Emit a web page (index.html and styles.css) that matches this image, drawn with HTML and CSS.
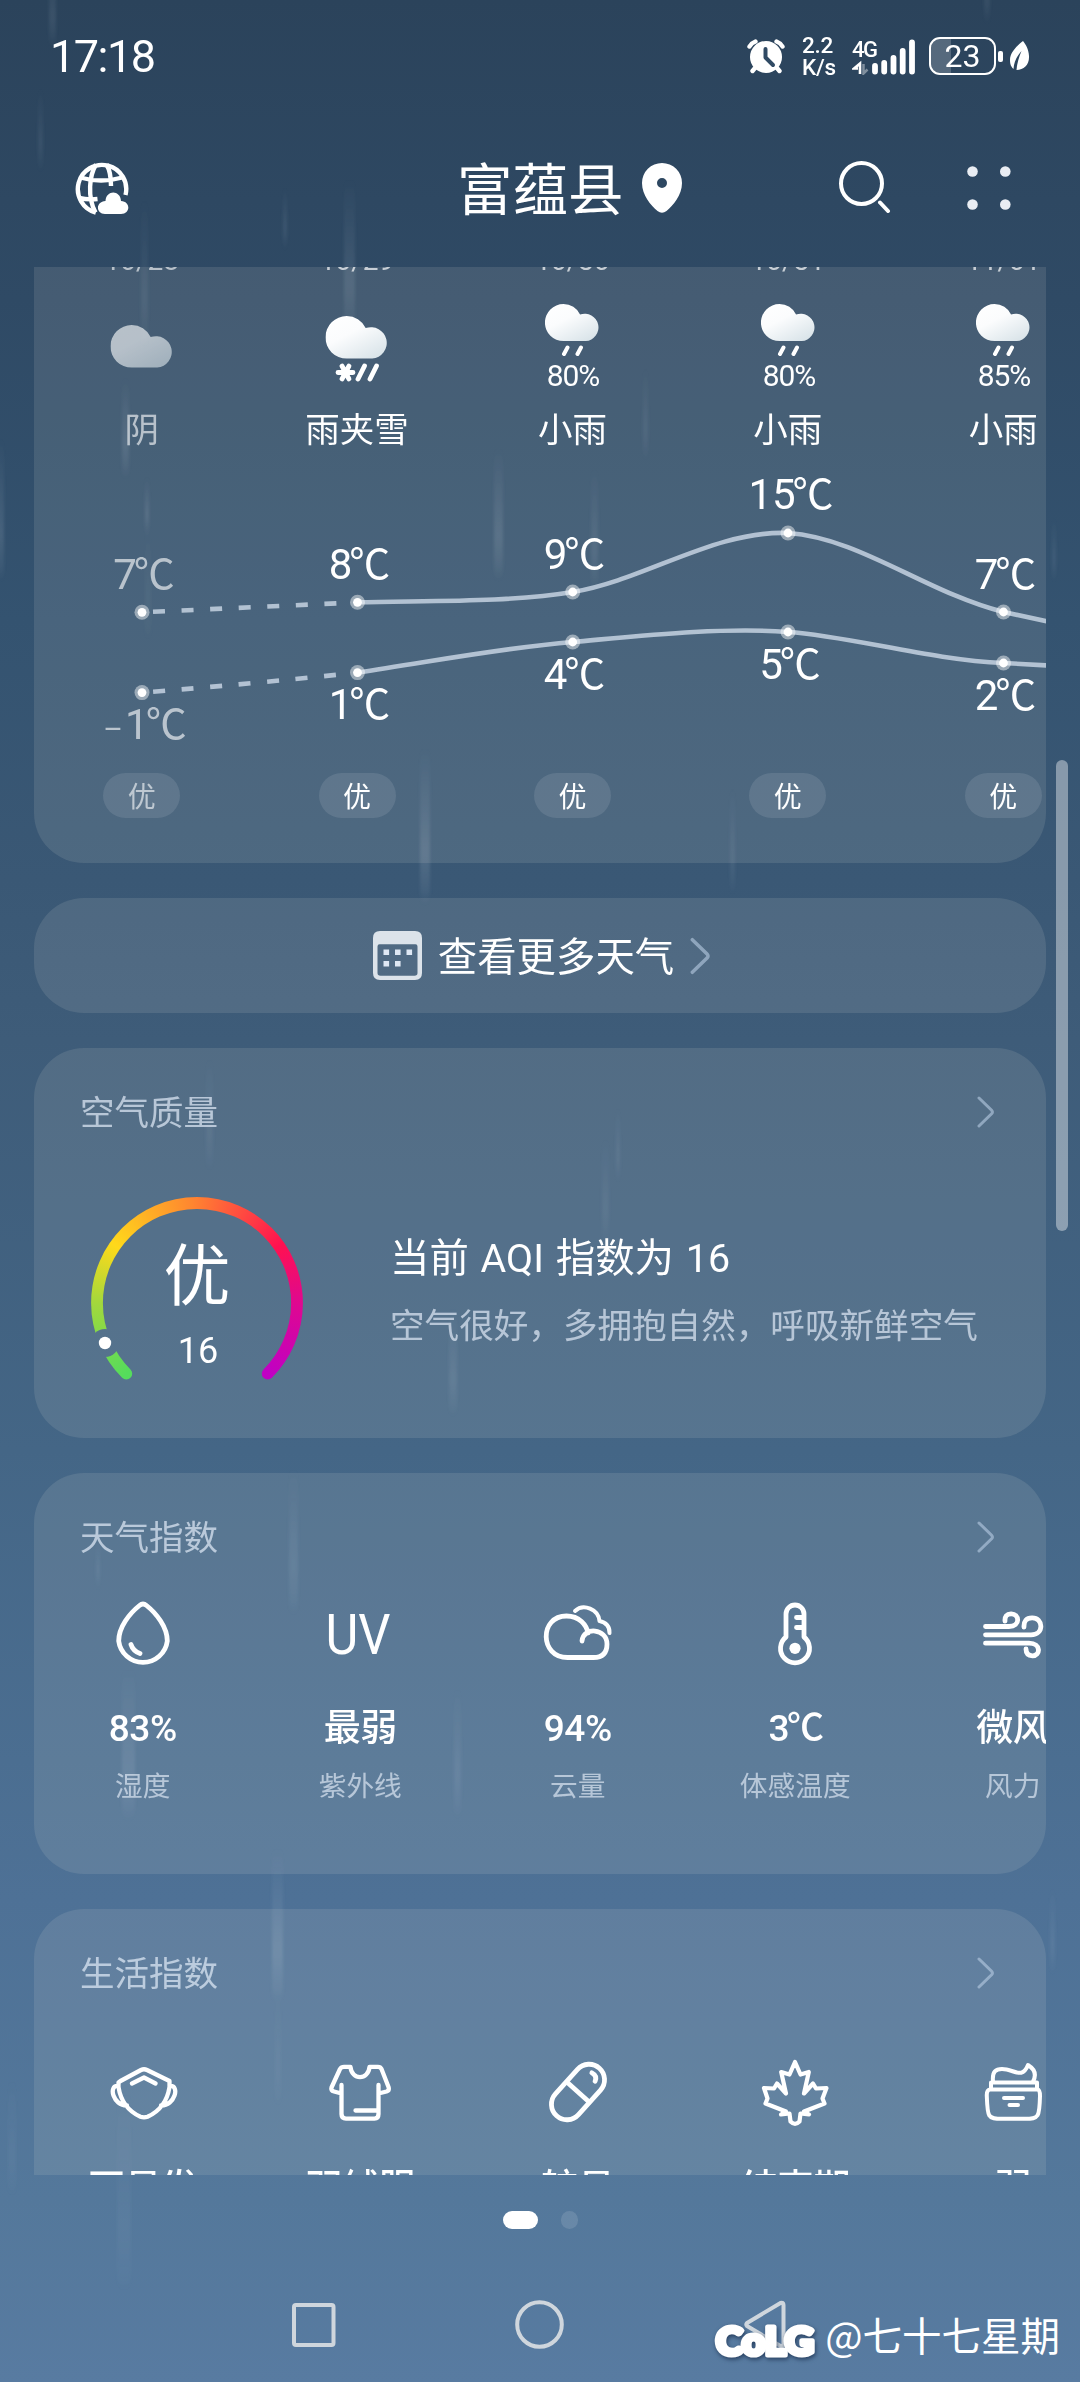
FILE: index.html
```html
<!DOCTYPE html>
<html lang="zh-CN">
<head>
<meta charset="utf-8">
<title>天气</title>
<link rel="stylesheet" href="styles.css">
</head>
<body>
<svg class="rain" width="1080" height="2382" viewBox="0 0 1080 2382" aria-hidden="true">
  <defs>
    <linearGradient id="streak" x1="0" y1="0" x2="0" y2="1">
      <stop offset="0" stop-color="#cfd8e6" stop-opacity="0"/>
      <stop offset=".7" stop-color="#cfd8e6" stop-opacity="1"/>
      <stop offset="1" stop-color="#cfd8e6" stop-opacity=".3"/>
    </linearGradient>
    <filter id="soft" x="0" y="0" width="1080" height="2382" filterUnits="userSpaceOnUse"><feGaussianBlur stdDeviation="1.6 5"/></filter>
  </defs>
  <g fill="url(#streak)" filter="url(#soft)">
    <rect x="49" y="-40" width="7" height="82" rx="3.5" opacity=".1"/>
    <rect x="984" y="-40" width="6" height="58" rx="3" opacity=".08"/>
    <rect x="38" y="90" width="5" height="76" rx="2.5" opacity=".08"/>
    <rect x="283" y="190" width="4" height="54" rx="2" opacity=".1"/>
    <rect x="344" y="180" width="11" height="150" rx="5" opacity=".12"/>
    <rect x="141" y="200" width="7" height="140" rx="3" opacity=".08"/>
    <rect x="122" y="380" width="7" height="92" rx="3.5" opacity=".13"/>
    <rect x="145" y="480" width="4" height="50" rx="2" opacity=".14"/>
    <rect x="145" y="530" width="6" height="104" rx="3" opacity=".05"/>
    <rect x="-5" y="440" width="9" height="135" rx="4" opacity=".13"/>
    <rect x="494" y="450" width="9" height="124" rx="4.500" opacity=".14"/>
    <rect x="591" y="470" width="7" height="112" rx="3.500" opacity=".1"/>
    <rect x="643" y="370" width="5" height="84" rx="2.500" opacity=".08"/>
    <rect x="1052" y="520" width="4" height="56" rx="2" opacity=".09"/>
    <rect x="420" y="750" width="10" height="148" rx="5" opacity=".16"/>
    <rect x="730" y="790" width="5" height="98" rx="2.500" opacity=".09"/>
    <rect x="206" y="1060" width="7" height="104" rx="3.500" opacity=".07"/>
    <rect x="616" y="1110" width="4" height="66" rx="2" opacity=".09"/>
    <rect x="602" y="1140" width="7" height="98" rx="3.500" opacity=".07"/>
    <rect x="449" y="1310" width="8" height="100" rx="4" opacity=".1"/>
    <rect x="289" y="1470" width="9" height="138" rx="4" opacity=".1"/>
    <rect x="96" y="1540" width="4" height="44" rx="2" opacity=".08"/>
    <rect x="122" y="1670" width="13" height="144" rx="6" opacity=".12"/>
    <rect x="454" y="1690" width="7" height="122" rx="3.500" opacity=".09"/>
    <rect x="272" y="1850" width="11" height="146" rx="5" opacity=".15"/>
    <rect x="275" y="1990" width="6" height="110" rx="3" opacity=".05"/>
    <rect x="117" y="2090" width="14" height="195" rx="7" opacity=".05"/>
    <rect x="8" y="2080" width="8" height="110" rx="4" opacity=".05"/>
    <rect x="1050" y="1890" width="5" height="78" rx="2.500" opacity=".09"/>
  </g>
</svg>

<svg class="defs" width="0" height="0" aria-hidden="true">
  <defs>
    <linearGradient id="cloudFill" x1="0" y1="0" x2=".75" y2="1">
      <stop offset="0" stop-color="#ffffff"/><stop offset=".45" stop-color="#fbfcfd"/><stop offset="1" stop-color="#dbe5ea"/>
    </linearGradient>
    <symbol id="cloud" viewBox="0 0 64 44">
      <path d="M21.500 0A21.500 21.500 0 0 1 40.800 12.200A16 16 0 1 1 47.500 43.200H21.500A21.500 21.500 0 0 1 21.500 0Z" fill="url(#cloudFill)"/>
    </symbol>
    <symbol id="rainy" viewBox="0 0 56 52">
      <use href="#cloud" width="55" height="37.800"/>
      <path d="M22.500 43.500L19 50M36 43.500L32.500 50" stroke="#fff" stroke-width="4" stroke-linecap="round"/>
    </symbol>
    <symbol id="chevron" viewBox="0 0 18 32">
      <path d="M2 2L14.600 14.200Q16.200 16 14.600 17.800L2 30" fill="none" stroke="currentColor" stroke-width="3" stroke-linecap="round"/>
    </symbol>
  </defs>
</svg>

<div class="status">
  <span class="clock">17:18</span>
  <div class="status-icons">
    <svg width="38" height="36" viewBox="0 0 38 36">
      <circle cx="19" cy="19" r="16" fill="#fff"/>
      <path d="M2.500 8.500Q4.500 5 8.500 3.500M35.500 8.500Q33.500 5 29.500 3.500M8 30L5.500 33M30 30L32.500 33" stroke="#fff" stroke-width="4.400" stroke-linecap="round" fill="none"/>
      <path d="M18.500 11V19.500L26 27" stroke="#304a64" stroke-width="4" stroke-linecap="round" stroke-linejoin="round" fill="none"/>
    </svg>
    <div class="speed"><span>2.2</span><span>K/s</span></div>
    <div class="signal">
      <svg width="64" height="37" viewBox="851 37 64 37">
        <text class="net" x="851" y="55.500">4G</text>
        <path d="M859 73V62.500L853 67.500H857" fill="none" stroke="#fff" stroke-width="2.600"/>
        <path d="M862.500 63V72.500L866.500 68.500" fill="none" stroke="#fff" stroke-opacity=".4" stroke-width="2.500"/>
        <path d="M874 65V70.500M883.200 62V70.500M892.500 57V70.500M901.700 50V70.500M911 41.500V70.500" stroke="#fff" stroke-width="5.800" stroke-linecap="round"/>
      </svg>
    </div>
    <div class="battery"><i class="level"></i><span>23</span></div>
    <i class="nub"></i>
    <svg class="leaf" width="20" height="30" viewBox="0 0 20 30">
      <path d="M13 0C8 4 0 11 0 19C0 24 1.500 26 3.500 28C4 21 7 15 11.500 10C9 16 7 22 6.500 29C14 29 19.500 24 19 15C18.700 8 15.500 3 13 0Z" fill="#fff"/>
    </svg>
  </div>
</div>

<header class="bar">
  <svg class="globe" width="54" height="54" viewBox="0 0 54 54">
    <g fill="none" stroke="#fff" stroke-width="4.400" stroke-linecap="butt">
      <path d="M20.800 51.500A24.200 24.200 0 1 1 50.500 34"/>
      <path d="M20.500 51.500C12 36 14.500 14 21 3.500M31.500 3.500C35.500 10 36 16 36 25M5 16.500Q26 22.500 47.500 16.500M4 37Q13 39 22.500 38"/>
    </g>
    <path d="M30 53C20.500 53 20.500 40.500 30.500 40C31 28.500 45.500 28.500 46 40C56 40.500 55.500 53 46 53Z" fill="#fff"/>
  </svg>
  <h1><span>富蕴县</span><svg width="40" height="50" viewBox="0 0 40 50"><path fill-rule="evenodd" d="M20 0A20 20 0 0 1 40 20C40 32 31 42.500 24.500 48Q20 51.500 15.500 48C9 42.500 0 32 0 20A20 20 0 0 1 20 0ZM20 15A5 5 0 1 0 20 25A5 5 0 1 0 20 15Z" fill="#fff"/></svg></h1>
  <div class="actions">
    <svg width="52" height="52" viewBox="0 0 52 52" fill="none" stroke="#fff" stroke-width="4" stroke-linecap="round"><circle cx="22.500" cy="22.500" r="20.500"/><path d="M41 41.500L49 50"/></svg>
    <svg width="44" height="44" viewBox="0 0 44 44" fill="#e9edf3"><circle cx="5.500" cy="5.500" r="5.300"/><circle cx="38.300" cy="5.500" r="5.300"/><circle cx="5.500" cy="38.500" r="5.300"/><circle cx="38.300" cy="38.500" r="5.300"/></svg>
  </div>
</header>

<main class="scroller">
  <section class="card forecast">
    <div class="days">
      <div class="day past"><time>10/28</time>
        <svg width="80" height="108"><use href="#cloud" x="8.500" y="40" width="63" height="43.500"/></svg><span>阴</span></div>
      <div class="day"><time>10/29</time>
        <svg width="80" height="108"><use href="#cloud" x="8.500" y="31" width="63" height="43.500"/>
          <path d="M21 87.500H36M25 81L32 94M32 81L25 94M47.500 81L41 94M59.500 81L53 94" stroke="#fff" stroke-width="4.800" stroke-linecap="round"/></svg><span>雨夹雪</span></div>
      <div class="day"><time>10/30</time>
        <svg width="80" height="108"><use href="#rainy" x="13" y="19" width="56" height="52"/><text class="chance" x="41" y="101">80%</text></svg><span>小雨</span></div>
      <div class="day"><time>10/31</time>
        <svg width="80" height="108"><use href="#rainy" x="13" y="19" width="56" height="52"/><text class="chance" x="41" y="101">80%</text></svg><span>小雨</span></div>
      <div class="day"><time>11/01</time>
        <svg width="80" height="108"><use href="#rainy" x="13" y="19" width="56" height="52"/><text class="chance" x="41" y="101">85%</text></svg><span>小雨</span></div>
    </div>
    <svg class="chart" width="1012" height="310" viewBox="34 450 1012 310">
      <g class="line">
        <path stroke-dasharray="12 16.600" stroke-dashoffset="-11" d="M142 612.300L344 603"/>
        <path stroke-dasharray="12 16.600" stroke-dashoffset="-11" d="M142 692.600Q250 684 344 674"/>
        <path d="M357.500 602.300C430 600.500 510 602.500 572.700 592C645 580 715 530 788 533C860 538 925 592 1003.500 612L1048 621.500"/>
        <path d="M357.500 672.600C430 662 500 648 572.700 642C640 636 720 627 788 632C850 636 930 660 1003.500 663L1048 665.500"/>
      </g>
      <g fill="#fff" fill-opacity=".45">
        <circle cx="142" cy="612.300" r="7.500"/><circle cx="357.500" cy="602.300" r="7.500"/><circle cx="572.700" cy="592" r="7.500"/><circle cx="788" cy="533" r="7.500"/><circle cx="1003.500" cy="612" r="7.500"/>
        <circle cx="142" cy="692.600" r="7.500"/><circle cx="357.500" cy="672.600" r="7.500"/><circle cx="572.700" cy="642" r="7.500"/><circle cx="788" cy="632" r="7.500"/><circle cx="1003.500" cy="663" r="7.500"/>
      </g>
      <g fill="#fff">
        <circle cx="142" cy="612.300" r="4.400"/><circle cx="357.500" cy="602.300" r="4.400"/><circle cx="572.700" cy="592" r="4.400"/><circle cx="788" cy="533" r="4.400"/><circle cx="1003.500" cy="612" r="4.400"/>
        <circle cx="142" cy="692.600" r="4.400"/><circle cx="357.500" cy="672.600" r="4.400"/><circle cx="572.700" cy="642" r="4.400"/><circle cx="788" cy="632" r="4.400"/><circle cx="1003.500" cy="663" r="4.400"/>
      </g>
      <g class="temp">
        <text class="past" x="143" y="589">7<tspan dx="-3">℃</tspan></text>
        <text x="358.500" y="579">8<tspan dx="-3">℃</tspan></text>
        <text x="573.500" y="569">9<tspan dx="-3">℃</tspan></text>
        <text x="790" y="509">15<tspan dx="-3">℃</tspan></text>
        <text x="1004.500" y="589">7<tspan dx="-3">℃</tspan></text>
        <text class="past" x="144" y="739"><tspan class="minus">–</tspan>1<tspan dx="-3">℃</tspan></text>
        <text x="358.500" y="719">1<tspan dx="-3">℃</tspan></text>
        <text x="573.500" y="689">4<tspan dx="-3">℃</tspan></text>
        <text x="789" y="679">5<tspan dx="-3">℃</tspan></text>
        <text x="1004.500" y="710">2<tspan dx="-3">℃</tspan></text>
      </g>
    </svg>
    <div class="grades">
      <div><b class="past">优</b></div><div><b>优</b></div><div><b>优</b></div><div><b>优</b></div><div><b>优</b></div>
    </div>
  </section>

  <section class="card more">
    <svg width="49" height="49" viewBox="0 0 49 49"><path fill="#dce3ea" fill-rule="evenodd" d="M7 0H42Q49 0 49 7V42Q49 49 42 49H7Q0 49 0 42V7Q0 0 7 0ZM4.500 15.500V42Q4.500 44.700 7.500 44.700H41.500Q44.500 44.700 44.500 42V15.500Q44.500 13.300 42.500 13.300H6.500Q4.500 13.300 4.500 15.500Z"/><path d="M10.500 18.500h5.600v5.600h-5.600zM22 18.500h5.600v5.600H22zM33.500 18.500h5.600v5.600h-5.600zM10.500 30h5.600v5.600h-5.600zM22 30h5.600v5.600H22z" fill="#dfe8f4"/></svg>
    <span>查看更多天气</span>
    <svg class="chev" width="21" height="38"><use href="#chevron"/></svg>
  </section>

  <section class="card air">
    <div class="head"><h2>空气质量</h2><svg class="chev" width="18" height="32"><use href="#chevron"/></svg></div>
    <div class="air-body">
      <div class="gauge">
        <svg width="214" height="214" viewBox="-107 -107 214 214">
          <defs><mask id="arc" maskUnits="userSpaceOnUse" x="-107" y="-107" width="214" height="214">
            <path d="M-70.700 70.700A100 100 0 1 1 70.700 70.700" fill="none" stroke="#fff" stroke-width="11.800" stroke-linecap="round"/>
            <circle cx="-92" cy="40" r="14" fill="#000"/>
          </mask></defs>
          <g mask="url(#arc)"><foreignObject x="-107" y="-107" width="214" height="214"><div class="spectrum"></div></foreignObject></g>
          <circle cx="-92" cy="40" r="6.200" fill="#fff"/>
        </svg>
        <div class="reading"><strong>优</strong><span>16</span></div>
      </div>
      <div class="advice"><p>当前 <i>AQI</i> 指数为 <i>16</i></p><p>空气很好，多拥抱自然，呼吸新鲜空气</p></div>
    </div>
  </section>

  <section class="card weather">
    <div class="head"><h2>天气指数</h2><svg class="chev" width="18" height="32"><use href="#chevron"/></svg></div>
    <div class="tiles">
      <div class="tile">
        <svg width="70" height="70" viewBox="107.500 1600 70 70"><path d="M139 1605.500Q142.500 1602.500 146 1605.500C156 1613.500 166.800 1627 166.800 1641A24.500 24.500 0 0 1 118.200 1641C118.200 1627 129 1613.500 139 1605.500Z"/><path d="M130.500 1644.500Q132.500 1651 139.500 1653.500"/></svg>
        <b>83%</b><span>湿度</span></div>
      <div class="tile">
        <svg width="70" height="70" viewBox="324.500 1600 70 70"><text class="uv" x="325" y="1654" textLength="65" lengthAdjust="spacingAndGlyphs">UV</text></svg>
        <b>最弱</b><span>紫外线</span></div>
      <div class="tile">
        <svg width="70" height="70" viewBox="542.500 1600 70 70"><path d="M581.500 1641C583 1626 606.500 1628.500 606.500 1644Q606.500 1657.500 593 1657.500H567C539 1657.500 538.500 1616 566 1616C579 1616 586 1625 587.500 1633"/><path stroke-width="4" d="M574.500 1611C583 1603 598 1609.500 599 1621C605.500 1622 609.500 1627 609 1633"/></svg>
        <b>94%</b><span>云量</span></div>
      <div class="tile">
        <svg width="70" height="70" viewBox="759.500 1600 70 70"><path d="M785.500 1637V1614A9 9 0 0 1 803.500 1614V1637A14.500 14.500 0 1 1 785.500 1637Z"/><path d="M796 1617.500H803M796 1627.500H803"/><circle cx="794.500" cy="1648.300" r="5.600" class="solid"/></svg>
        <b>3<em>℃</em></b><span>体感温度</span></div>
      <div class="tile">
        <svg width="70" height="70" viewBox="977 1600 70 70"><path d="M984.500 1626.500H1008C1020 1626.500 1018.500 1613.500 1010 1613.800Q1003.500 1614 1004 1621M984.500 1634.800H1030C1043.500 1634.800 1042.500 1617.500 1031 1617.800Q1022.500 1618 1023 1627M984.500 1643.200H1028C1040.500 1643.200 1039.500 1656 1031.500 1655.800Q1025 1655.500 1025 1649"/></svg>
        <b>微风</b><span>风力</span></div>
    </div>
  </section>

  <section class="card life">
    <div class="head"><h2>生活指数</h2><svg class="chev" width="18" height="32"><use href="#chevron"/></svg></div>
    <div class="tiles">
      <div class="tile">
        <svg width="70" height="70" viewBox="108 2058 70 70"><path stroke-width="4.300" d="M120.500 2081L141 2070Q144 2068.500 147 2070L169.500 2081V2087C167 2103 158 2112 147.500 2116.800Q144 2118 140.500 2116.800C130 2112 121 2103 118.500 2087V2082.500ZM132 2083.500L144 2077.500L155.500 2083.500M118 2086C108 2085 113 2106 127 2105.500M170 2086C180 2085 175 2106 161 2105.500"/></svg>
        <b>不易发</b></div>
      <div class="tile">
        <svg width="70" height="70" viewBox="325 2058 70 70"><path stroke-width="4.300" d="M341.500 2085V2114Q341.500 2118.600 346 2118.600H374.500Q378.500 2118.600 378.500 2114V2085M341.500 2093.500L334 2091.500Q330.500 2090.500 331.500 2087.500L340 2069Q341.300 2066.800 344 2066.800H350.500C351.500 2080.500 368.500 2080.500 369.500 2066.800H378Q380.500 2066.800 381.500 2069L388.700 2087.500Q389.500 2090.500 386.500 2091.500L378.500 2093.500M355.500 2110.500H378"/></svg>
        <b>羽绒服</b></div>
      <div class="tile">
        <svg width="70" height="70" viewBox="542 2058 70 70"><g transform="rotate(42 577 2092)"><rect x="561.500" y="2060" width="31" height="64" rx="15.500"/><path d="M562 2092H592M574.500 2068.500Q580.500 2067 582.500 2072.500"/></g></svg>
        <b>较易</b></div>
      <div class="tile">
        <svg width="70" height="70" viewBox="759.500 2058 70 70"><path stroke-width="4.200" d="M794.500 2062L800 2074.500L808.300 2072L803.500 2093.500L812.500 2083.500L815.500 2088.500L826 2088L822 2098.500L824 2103.500L803.500 2111.500L808.500 2114.500L800 2113.500L799 2121.500Q794.500 2126 790 2121.500L789 2113.500L780.500 2114.500L785.500 2111.500L765 2103.500L767 2098.500L763.500 2088L773.500 2088.500L776.500 2083.500L785.500 2093.500L780.700 2072L789 2074.500Z"/></svg>
        <b>结束期</b></div>
      <div class="tile">
        <svg width="70" height="70" viewBox="976 2058 70 70"><path stroke-width="4" d="M989 2082.500H1035V2089.500H989ZM988 2089.500Q984.500 2090 984.800 2096C985.500 2117 985.500 2118.800 1000 2118.800H1023C1037 2118.800 1037.500 2117 1038 2096Q1038 2090 1035.500 2089.500M991 2081.500C990 2071 994 2069 1000 2069C1012 2069 1020 2080 1026 2065C1034 2070 1034 2076 1031 2081.500M1002 2098H1021M1007.500 2105H1016"/></svg>
        <b>弱</b></div>
    </div>
  </section>
</main>

<div class="pager"><i class="on"></i><i></i></div>

<nav class="keys">
  <svg width="44" height="44" viewBox="0 0 44 44"><rect x="2" y="2" width="39.500" height="40" rx="2"/></svg>
  <svg width="49" height="49" viewBox="0 0 49 49"><circle cx="24.500" cy="24.500" r="22.300"/></svg>
  <svg width="44" height="49" viewBox="0 0 44 49"><path d="M37.500 3L4 23Q2.500 24.500 4 26L37.500 46Q40.500 47 40.500 44V5Q40.500 2 37.500 3Z"/></svg>
</nav>

<div class="mark"><svg width="106" height="46" viewBox="0 0 106 46"><text x="2" y="37" textLength="98" lengthAdjust="spacingAndGlyphs">CoLG</text></svg><span>@七十七星期</span></div>
<i class="thumb"></i>
</body>
</html>
```
FILE: styles.css
```css
* { box-sizing: border-box; margin: 0; padding: 0; }
i, em { font-style: normal; }

body {
  position: relative;
  width: 1080px;
  height: 2382px;
  overflow: hidden;
  display: flex;
  flex-direction: column;
  color: #fff;
  font-family: Roboto, "Noto Sans CJK SC", sans-serif;
  background: linear-gradient(#2b435b 0, #2e4862 200px, #2f4a65 300px, #345370 620px, #3a5875 880px, #3e5c79 1040px, #446686 1450px, #4b6e91 1760px, #4e7196 1900px, #54789b 2200px, #587ba1 2382px);
}
svg { display: block; flex: none; }
.rain { position: absolute; left: 0; top: 0; }
.defs { position: absolute; }

.status {
  height: 112px;
  padding: 0 50px 0 50px;
  display: flex;
  justify-content: space-between;
  align-items: center;
  position: relative;
}
.clock { font-size: 45px; letter-spacing: -1.5px; line-height: 52px; padding-top: 1px; }
.status-icons { display: flex; align-items: center; }
.speed { display: flex; flex-direction: column; width: 36px; margin: 0 14px 0 17px; font-size: 22.500px; line-height: 22px; letter-spacing: -.3px; font-weight: 500; }
.net { font: 500 22px Roboto, sans-serif; fill: #fff; letter-spacing: -1.5px; }
.battery {
  width: 67px; height: 38px; margin-left: 13px;
  border: 2.5px solid #fff; border-radius: 11px;
  position: relative; overflow: hidden;
  display: flex; align-items: center; justify-content: center;
  font-size: 32px; line-height: 36px;
}
.battery span { position: relative; }
.level { position: absolute; left: 0; top: 0; bottom: 0; width: 20px; background: rgba(255,255,255,.2); }
.nub { width: 5px; height: 11px; border-radius: 2px; background: #fff; margin-left: 2px; }
.leaf { margin-left: 7px; }

.bar {
  position: relative;
  height: 155px;
  padding: 0 69px 4px 75px;
  display: grid;
  grid-template-columns: 382px 1fr auto;
}
.globe { margin-top: 49px; }
h1 { display: flex; margin-top: 38px; font-size: 55.500px; font-weight: 400; line-height: 76px; gap: 18px; align-items: center; height: 76px; font-family: "Noto Sans CJK SC", sans-serif; }
h1 span { margin-top: -4px; }
.actions { display: flex; gap: 76px; margin-top: 49px; }
.actions svg + svg { margin-top: 5px; }

.scroller {
  position: relative;
  height: 1908px;
  overflow: hidden;
  padding: 0 34px;
  display: flex;
  flex-direction: column;
  gap: 35px;
}
.card { flex: none; border-radius: 50px; background: rgba(222,220,212,.125); overflow: hidden; }

.forecast { height: 696px; margin-top: -100px; padding-top: 77px; }
.days, .grades { display: grid; grid-template-columns: repeat(5, 215.400px); }
.day { display: flex; flex-direction: column; align-items: center; }
.day time { font-size: 28px; line-height: 33px; opacity: .7; height: 34px; margin-bottom: 7px; }
.day span { font-family: "Noto Sans CJK SC", sans-serif; font-size: 34.500px; line-height: 40px; margin: 14px 0 3px; }
.chance { font: 30px Roboto, sans-serif; fill: #fff; text-anchor: middle; letter-spacing: -1px; }
.past { opacity: .62; }
.day.past time { opacity: 1; }
.line { fill: none; stroke: #d8e2f0; stroke-opacity: .74; stroke-width: 4.600px; }
.temp { font: 42px Roboto, sans-serif; fill: #fff; text-anchor: middle; }
.temp tspan { font-family: "Noto Sans CJK SC", sans-serif; font-size: 41px; letter-spacing: -2px; }
.temp .minus { font-family: Roboto, sans-serif; font-size: 30px; letter-spacing: 2px; }
.grades { margin-top: 13px; }
.grades div { display: flex; justify-content: center; height: 45px; }
.grades b { width: 77px; height: 45px; border-radius: 23px; background: rgba(255,255,255,.1); font: 400 28px/44px "Noto Sans CJK SC", sans-serif; text-align: center; }
.grades b.past { opacity: 1; color: rgba(255,255,255,.6); }

.more { height: 115px; padding-left: 4px; display: flex; align-items: center; justify-content: center; gap: 16px; font: 39.400px/56px "Noto Sans CJK SC", sans-serif; }
.more span { margin-top: -3px; }
.chev { color: rgba(185,205,228,.6); }
.chev use { width: 100%; height: 100%; }

.head { display: flex; justify-content: space-between; align-items: center; height: 52px; margin: 38px 51px 0 46px; }
h2 { font: 400 34.500px/52px "Noto Sans CJK SC", sans-serif; color: rgba(225,234,246,.72); margin-top: -5px; }

.air { height: 390px; }
.air-body { display: flex; margin: 58px 0 0 56px; }
.gauge { position: relative; width: 214px; height: 214px; }
.spectrum { width: 214px; height: 214px; background: conic-gradient(from 225deg, #55dc5c 0, #a3d83c 45deg, #ffd91a 80deg, #ff8630 132deg, #ff1150 190deg, #df0890 225deg, #c000c4 270deg, #c000c4 315deg, #55dc5c 315deg); }
.reading { position: absolute; inset: 0; display: flex; flex-direction: column; align-items: center; }
.reading strong { font: 400 67px/80px "Noto Sans CJK SC", sans-serif; margin-top: 35px; }
.reading span { font-size: 36px; line-height: 40px; margin-top: 20px; padding-left: 2px; }
.advice { margin-left: 86px; font-family: "Noto Sans CJK SC", sans-serif; white-space: nowrap; }
.advice i { font-family: Roboto, sans-serif; }
.advice p:first-child { font-size: 39.400px; line-height: 56px; margin-top: 31px; word-spacing: 3px; }
.advice p + p { font-size: 34.600px; line-height: 52px; margin-top: 10px; color: rgba(225,234,246,.7); }

.weather { height: 401px; }
.life { height: 401px; }
.tiles { display: grid; grid-template-columns: repeat(5, 217.500px); margin-top: 37px; }
.life .tiles { margin-top: 59px; }
.tile { display: flex; flex-direction: column; align-items: center; white-space: nowrap; }
.tile svg { fill: none; stroke: #fff; stroke-width: 4.800px; stroke-linecap: round; stroke-linejoin: round; }
.tile svg .solid { fill: #fff; stroke: none; }
.tile svg .uv { font: 56px Roboto, sans-serif; fill: #fff; stroke: none; }
.tile b { font-size: 37px; font-weight: 500; line-height: 52px; height: 52px; margin-top: 33px; font-family: Roboto, "Noto Sans CJK SC", sans-serif; letter-spacing: -.5px; }
.life .tile b { margin-top: 35px; }
.tile b em { font-family: "Noto Sans CJK SC", sans-serif; font-size: 37px; line-height: 1; letter-spacing: -2px; margin-left: -2px; }
.tile span { font: 27.700px/40px "Noto Sans CJK SC", sans-serif; margin-top: 9px; color: rgba(225,234,246,.68); }

.pager { position: relative; display: flex; justify-content: center; gap: 23px; margin-top: 36px; height: 18px; }
.pager i { width: 17px; height: 18px; border-radius: 9px; background: rgba(255,255,255,.12); }
.pager .on { width: 35px; background: #fff; }

.keys { position: relative; display: flex; align-items: center; padding-left: 292px; margin-top: 71px; height: 49px; }
.keys svg { fill: none; stroke: #cfd6dd; stroke-width: 4px; stroke-linejoin: round; }
.keys svg + svg { margin-left: 179px; }

.mark { position: absolute; right: 20px; top: 2306px; display: flex; align-items: center; gap: 5px; height: 56px; }
.mark svg { margin-top: 13px; overflow: visible; filter: drop-shadow(1px 2px 2px rgba(20,40,70,.7)); }
.mark text { font: 900 38px Lato, sans-serif; fill: #fff; stroke: #fff; stroke-width: 5px; stroke-linejoin: round; }
.mark span { font: 39.500px/56px "Noto Sans CJK SC", sans-serif; }

.thumb { position: absolute; left: 1056px; top: 760px; width: 12px; height: 471px; border-radius: 6px; background: rgba(255,255,255,.4); }
```
